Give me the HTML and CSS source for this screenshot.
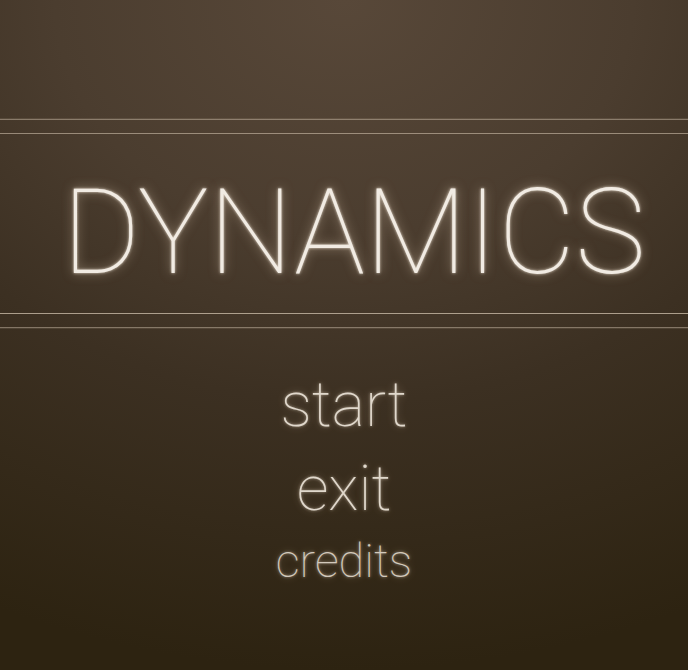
FILE: index.html
```html
<!DOCTYPE html>
<html lang="en">
<head>
<meta charset="utf-8">
<title>Dynamics</title>
<link rel="stylesheet" href="styles.css">
</head>
<body>
<main class="screen">
  <header class="title-band">
    <div class="title-inner">
      <h1 class="title">DYNAMICS</h1>
    </div>
  </header>
  <nav class="menu">
    <a class="menu-item menu-item--big" href="#">start</a>
    <a class="menu-item menu-item--big" href="#">exit</a>
    <a class="menu-item menu-item--small" href="#">credits</a>
  </nav>
</main>
</body>
</html>
```
FILE: styles.css
```css
html, body {
  margin: 0;
  padding: 0;
  height: 100%;
}
body {
  background: radial-gradient(ellipse 120% 100% at 50% 0%, #584839 0%, #4b3d2f 35%, #3c3022 60%, #2d2311 100%);
  font-family: Roboto, "Noto Sans", sans-serif;
  overflow: hidden;
}
.screen {
  display: flex;
  flex-direction: column;
  height: 100%;
  padding-top: 119px;
  box-sizing: border-box;
}
.title-band {
  border-top: 1px solid rgba(220, 205, 185, 0.45);
  border-bottom: 1px solid rgba(220, 205, 185, 0.45);
  box-shadow: 0 -1px 0 rgba(220,205,185,0.12), 0 1px 0 rgba(220,205,185,0.12);
  padding: 13px 0;
}
.title-inner {
  border-top: 1px solid rgba(220, 205, 185, 0.55);
  border-bottom: 1px solid rgba(220, 205, 185, 0.7);
  padding: 28px 0 10px 0;
}
.title {
  margin: 0;
  font-weight: 100;
  font-size: 119px;
  line-height: 141px;
  color: #f1ebe3;
  text-align: center;
  padding-left: 20px;
  text-shadow: 0 0 3px rgba(255, 245, 230, 0.85), 0 0 11px rgba(255, 235, 210, 0.5);
}
.menu {
  display: flex;
  flex-direction: column;
  align-items: center;
  padding-top: 35px;
}
.menu-item {
  color: #e0d8cc;
  text-decoration: none;
  font-weight: 100;
  text-shadow: 0 0 3px rgba(255, 240, 220, 0.55), 0 0 9px rgba(255, 230, 200, 0.3);
}
.menu-item--big {
  font-size: 63px;
  line-height: 84px;
}
.menu-item--small {
  font-size: 47px;
  line-height: 60px;
  color: #d2c9bc;
}
```
